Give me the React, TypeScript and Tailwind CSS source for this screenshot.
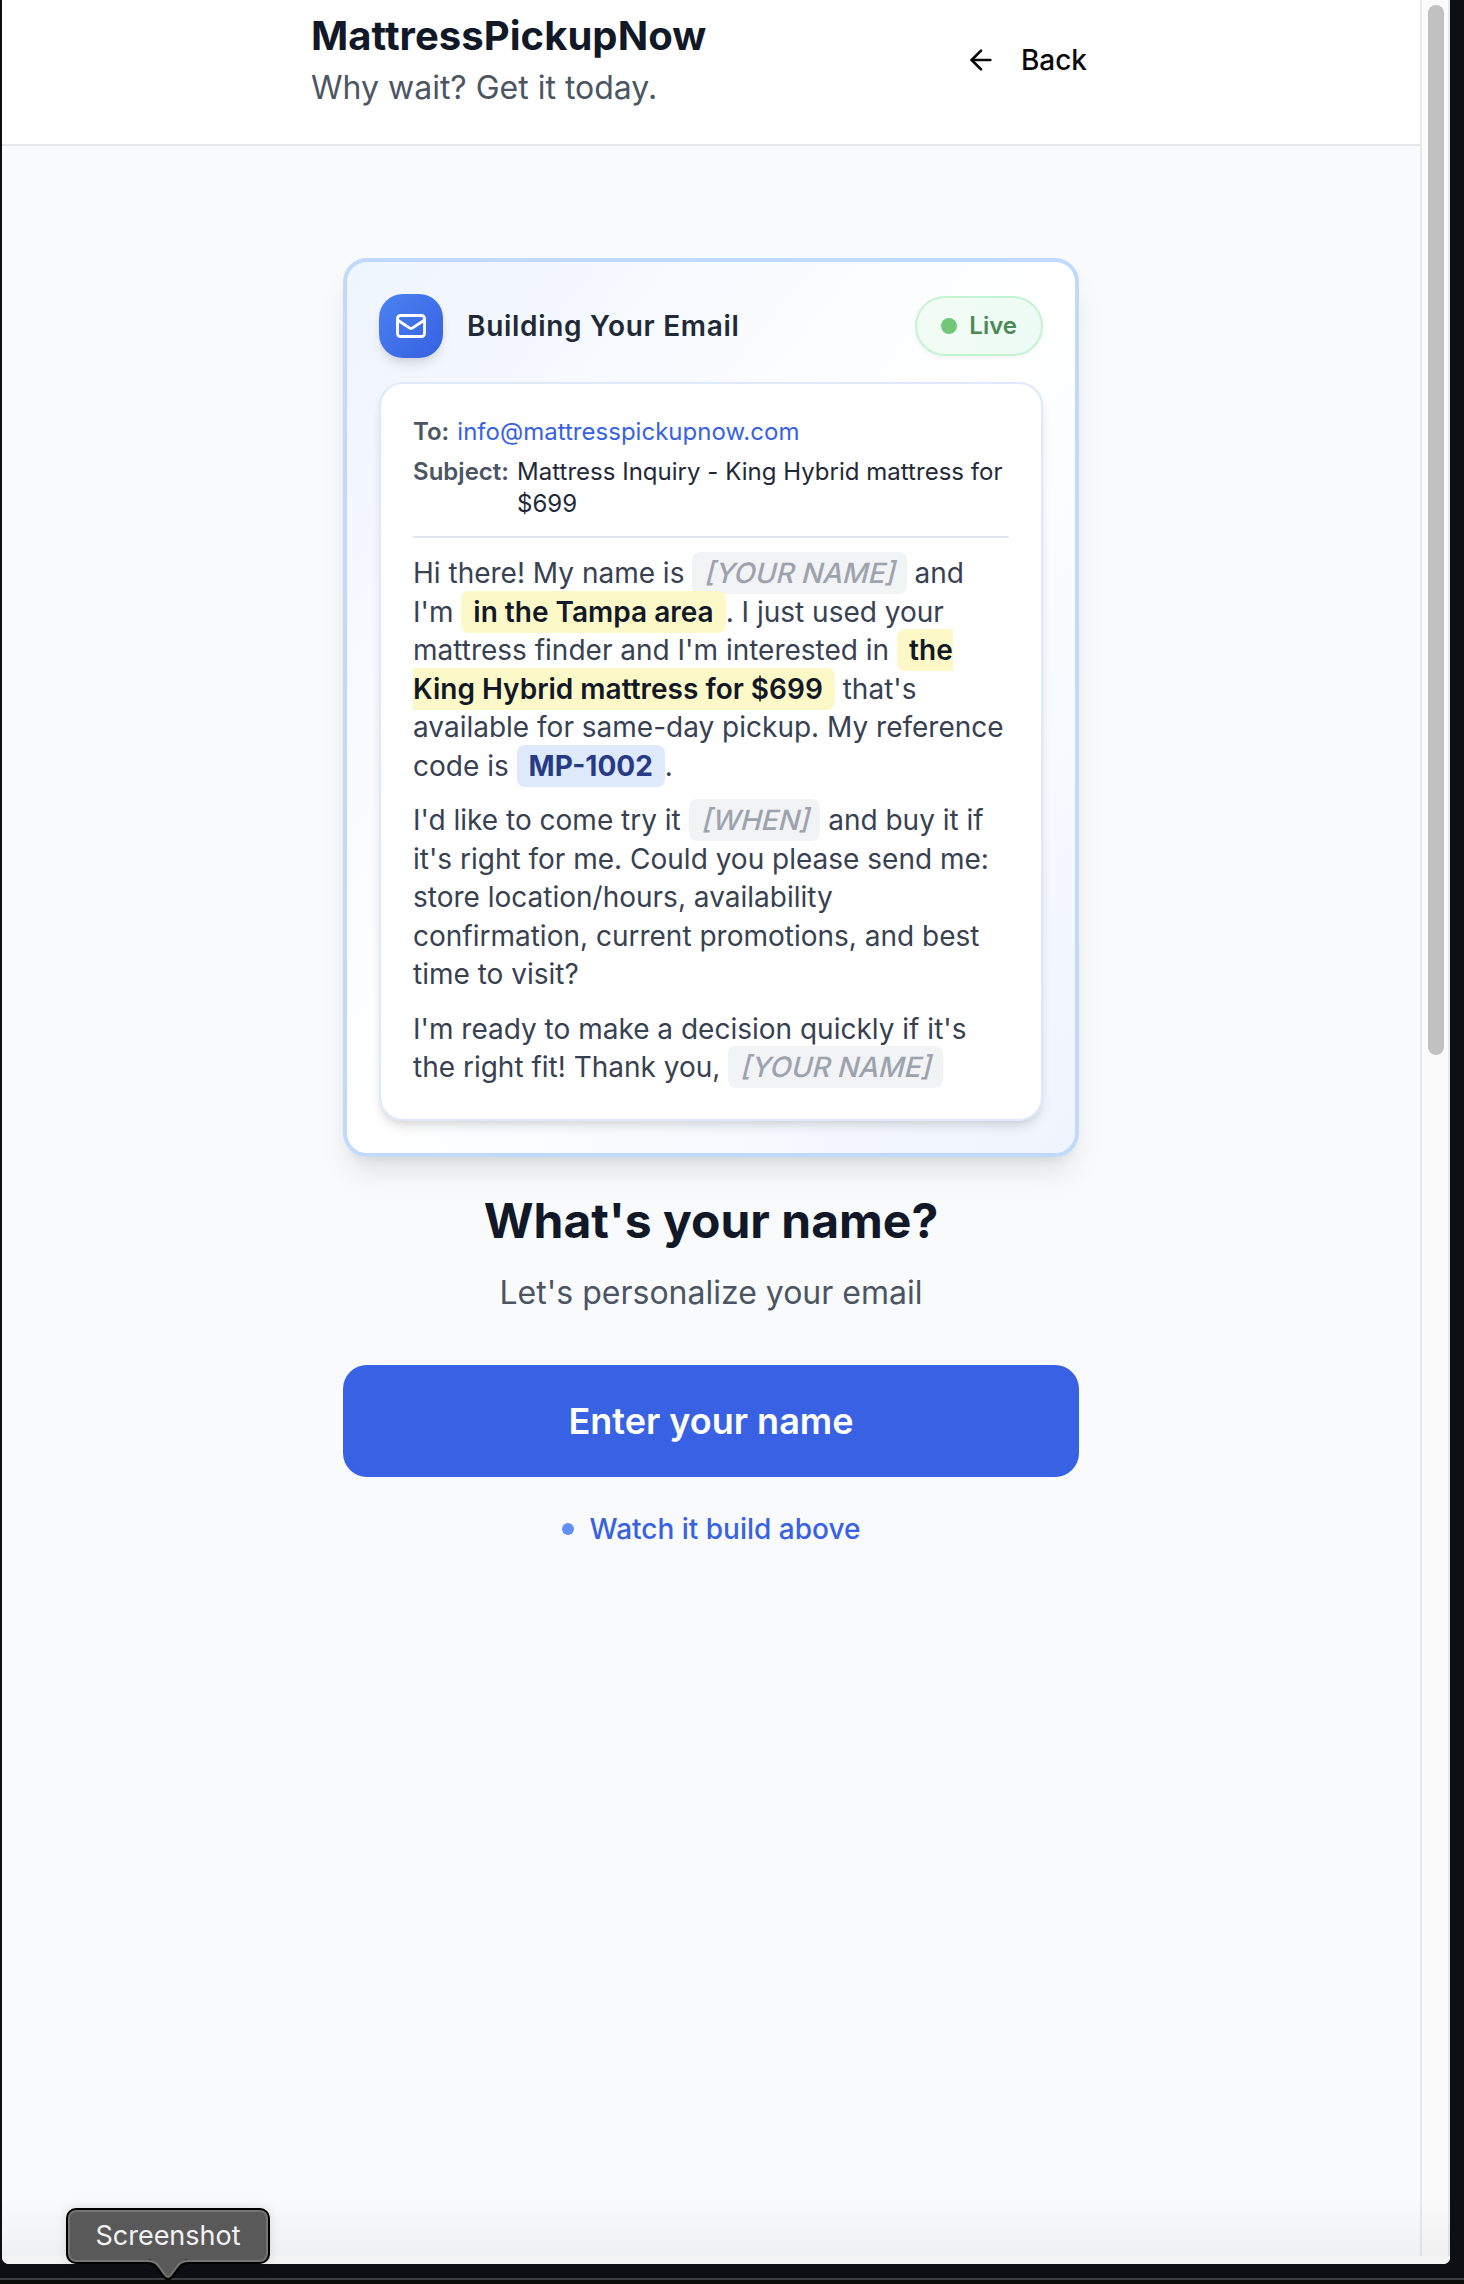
import React from "react";
import { ArrowLeft } from "lucide-react";

function Blank({ children }: { children: React.ReactNode }) {
  return (
    <span className="rounded-[8px] bg-[#f2f3f5] px-[12px] py-[4px] font-medium text-[#9ca3af]">
      <span className="inline-block origin-[50%_24px] -skew-x-[14deg] leading-[28px]">{children}</span>
    </span>
  );
}

function Filled({ children }: { children: React.ReactNode }) {
  return (
    <span className="rounded-[8px] bg-[#fdf8c8] px-[12px] py-[4px] font-semibold text-[#111827]">{children}</span>
  );
}

function MailIcon() {
  return (
    <svg width="36" height="36" viewBox="0 0 24 24" fill="none" stroke="white" strokeWidth="1.9" strokeLinecap="round" strokeLinejoin="round">
      <path d="M3 8l7.89 5.26a2 2 0 002.22 0L21 8M5 19h14a2 2 0 002-2V7a2 2 0 00-2-2H5a2 2 0 00-2 2v10a2 2 0 002 2z" />
    </svg>
  );
}

function Header() {
  return (
    <header className="h-[146px] shrink-0 border-b-2 border-[#e5e7eb] bg-white pt-[8px]">
      <div className="mx-auto flex w-[800px] items-center justify-between">
        <div>
          <h1 className="text-[40px] leading-[56px] font-bold tracking-[0.05px] text-[#111827]">MattressPickupNow</h1>
          <p className="text-[32px] leading-[48px] text-[#4b5563]">Why wait? Get it today.</p>
        </div>
        <button className="flex items-center gap-[24px] pr-[24px] text-[28px] leading-[40px] font-medium text-[#09090b]">
          <ArrowLeft size={32} strokeWidth={2} />
          Back
        </button>
      </div>
    </header>
  );
}

function EmailCard() {
  return (
    <section className="rounded-[24px] border-4 border-[#c1d9fc] bg-linear-to-br from-[#eff5fe] via-white to-[#eff4fe] p-[32px] shadow-[0_20px_30px_-6px_rgba(0,0,0,0.1),0_8px_12px_-8px_rgba(0,0,0,0.1)]">
      <div className="flex items-center justify-between">
        <div className="flex items-center gap-[24px]">
          <div className="flex size-[64px] items-center justify-center rounded-[24px] bg-linear-to-br from-[#4b82f0] to-[#3660e1] shadow-[0_8px_12px_-2px_rgba(0,0,0,0.1),0_4px_8px_-4px_rgba(0,0,0,0.1)]">
            <MailIcon />
          </div>
          <h2 className="text-[28px] leading-[40px] font-semibold tracking-[0.7px] text-[#1f2937]">Building Your Email</h2>
        </div>
        <div className="flex h-[60px] items-center gap-[12px] rounded-full border-2 border-[#c3f4d1] bg-linear-to-r from-[#f2fcf5] to-[#edfcf5] px-[24px] shadow-[0_2px_4px_rgba(0,0,0,0.05)]">
          <span className="size-[16px] rounded-full bg-[#70c779]" />
          <span className="text-[24px] leading-[32px] font-semibold text-[#4b8a55]">Live</span>
        </div>
      </div>
      <div className="mt-[24px] rounded-[24px] border-2 border-[#dee9fc] bg-white p-[32px] shadow-[0_8px_12px_-2px_rgba(0,0,0,0.1),0_4px_8px_-4px_rgba(0,0,0,0.1)]">
        <div className="flex flex-col gap-[8px] border-b-2 border-[#e0e5f2] pb-[16px] text-[24px] leading-[32px] tracking-[0.02px]">
          <div className="flex gap-[8px]">
            <span className="font-semibold text-[#4b5563]">To:</span>
            <span className="text-[#3862e3]">info@mattresspickupnow.com</span>
          </div>
          <div className="flex gap-[8px]">
            <span className="font-semibold text-[#4b5563]">Subject:</span>
            <span className="text-[#1f2937]">Mattress Inquiry - King Hybrid mattress for $699</span>
          </div>
        </div>
        <div className="flex flex-col gap-[16px] pt-[16px] text-[28px] leading-[38.5px] text-[#374151]">
          <p>
            Hi there! My name is <Blank>[YOUR NAME]</Blank> and I'm <Filled>in the Tampa area</Filled>. I just used your
            mattress finder and I'm interested in <Filled>the King Hybrid mattress for $699</Filled> that's available for
            same-day pickup. My reference code is{" "}
            <span className="rounded-[8px] bg-[#dee9fc] px-[12px] py-[4px] font-bold text-[#263a85]">MP-1002</span>.
          </p>
          <p>
            I'd like to come try it <Blank>[WHEN]</Blank> and buy it if it's right for me. Could you please send me: store
            location/hours, availability confirmation, current promotions, and best time to visit?
          </p>
          <p>
            I'm ready to make a decision quickly if it's the right fit! Thank you, <Blank>[YOUR NAME]</Blank>
          </p>
        </div>
      </div>
    </section>
  );
}

function Tooltip() {
  return (
    <div className="absolute top-[2208px] left-[66px] h-[72px] w-[204px]">
      <div className="flex h-[56px] items-center justify-center rounded-[10px] border-2 border-black bg-[#595959] text-[27px] text-[#f2f2f2] shadow-[inset_0_0_0_2px_#757575,0_0_12px_rgba(0,0,0,0.12)]">
        Screenshot
      </div>
      <svg className="absolute top-[51px] left-[80px]" width="44" height="22" viewBox="0 0 44 22">
        <path d="M3 3 C9 3 11 6 14 10 L19 17 Q22 21 25 17 L30 10 C33 6 35 3 41 3" fill="none" stroke="#000000" strokeWidth="5" />
        <path d="M3 1 L3 3 C9 3 11 6 14 10 L19 16 Q22 20 25 16 L30 10 C33 6 35 3 41 3 L41 1 Z" fill="#595959" />
        <path d="M2 2 C9 2 11 5 14 9 L19 16 Q22 20 25 16 L30 9 C33 5 35 2 42 2" fill="none" stroke="#757575" strokeWidth="2" />
      </svg>
    </div>
  );
}

export default function App() {
  return (
    <div className="relative flex h-[2284px] w-[1464px] flex-col overflow-hidden bg-[#0e0f15] font-['Inter',sans-serif]">
      <div className="relative ml-[2px] flex h-[2264px] w-[1448px] overflow-hidden rounded-b-[7px] bg-[#f9fafc]">
        <div className="flex w-[1418px] flex-col">
          <Header />
          <main className="mx-auto w-[736px] pt-[112px]">
            <EmailCard />
            <h2 className="mt-[32px] text-center text-[48px] leading-[64px] font-bold text-[#111827]">What's your name?</h2>
            <p className="mt-[16px] text-center text-[32px] leading-[48px] text-[#4b5563]">Let's personalize your email</p>
            <button className="mt-[48px] flex h-[112px] w-full items-center justify-center rounded-[24px] bg-[#3862e3] text-[36px] font-semibold text-white">
              Enter your name
            </button>
            <div className="mt-[32px] flex items-center justify-center gap-[16px] text-[28px] leading-[40px] font-medium text-[#3862e3]">
              <span className="size-[12px] rounded-full bg-[#628ff2]" />
              Watch it build above
            </div>
          </main>
        </div>
        <div className="w-[30px] border-r-2 border-l-2 border-[#e8e8e8] bg-[#fafafa] pt-[5px] pl-[6px]">
          <div className="h-[1050px] w-[16px] rounded-full bg-[#c1c1c1]" />
        </div>
        <div className="absolute bottom-[8px] left-0 h-[56px] w-full bg-linear-to-b from-transparent to-black/[0.04]" />
        <div className="absolute bottom-0 left-0 h-[8px] w-full bg-[#f3f3f4]" />
      </div>
      <div className="mt-auto h-[6px] border-t-2 border-[#3c3d42] bg-[#0a0c09]" />
      <Tooltip />
    </div>
  );
}
